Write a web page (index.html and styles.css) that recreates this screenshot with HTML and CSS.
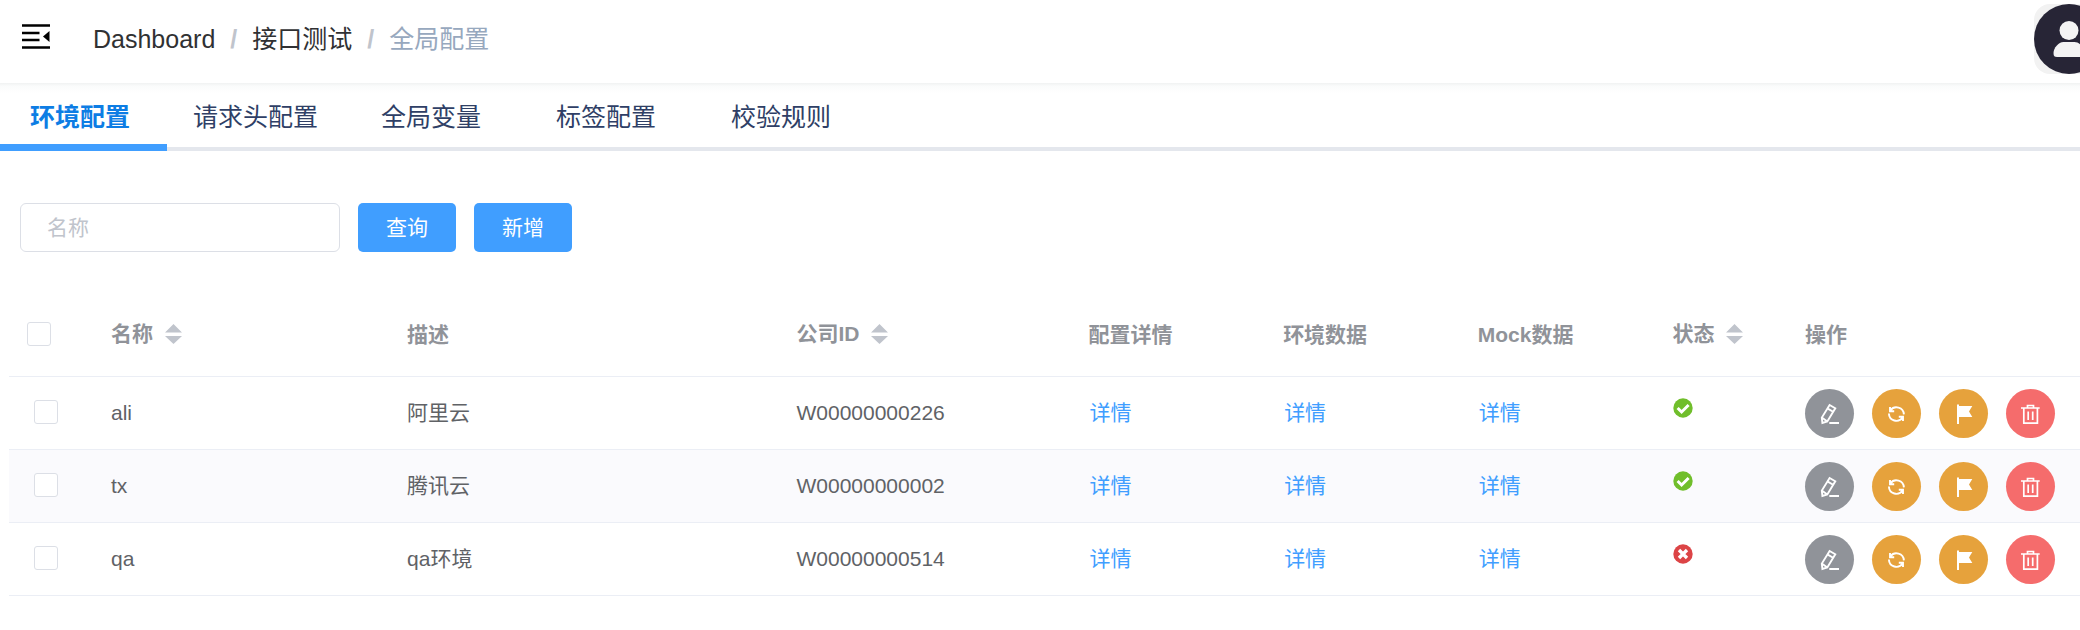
FILE: index.html
```html
<!DOCTYPE html>
<html lang="zh-CN">
<head>
<meta charset="utf-8">
<title>全局配置</title>
<link rel="stylesheet" href="styles.css">
</head>
<body>
<svg class="sprite" aria-hidden="true">
  <symbol id="i-edit" viewBox="0 0 49 49"><path d="M24.600 16l5.700 3.300-8 13.200-4.900 1.500-.6-5.400zM22.400 19.400l5.700 3.300M16.800 28.600l5.500 3.900M24.300 34H34" fill="none" stroke="currentColor" stroke-width="1.900"/></symbol>
  <symbol id="i-refresh" viewBox="0 0 49 49"><path d="M18 18v4.200h4.200M31 32v-4.200h-4.200M18.400 21.400a7.500 7.500 0 0 1 13.500 4M16.900 24.500a7.500 7.500 0 0 0 13.700 4" fill="none" stroke="currentColor" stroke-width="1.900"/></symbol>
  <symbol id="i-flag" viewBox="0 0 49 49"><path d="M18 15.500h2V17h13.300L30 22.500l3.300 5.500H20v7h-2z" fill="currentColor"/></symbol>
  <symbol id="i-delete" viewBox="0 0 49 49"><path d="M15 19h18.700M21.500 19v-2.500h6V19M17.800 19v15.200h13.600V19M22.200 22.500v8.500M26.700 22.500v8.500" fill="none" stroke="currentColor" stroke-width="1.700"/></symbol>
  <symbol id="i-ok" viewBox="0 0 20 20"><circle cx="10" cy="10" r="9.700" fill="#70be2b"/><path d="M4.600 10l4 4 7-7" fill="none" stroke="#fff" stroke-width="3"/></symbol>
  <symbol id="i-bad" viewBox="0 0 20 20"><circle cx="10" cy="10" r="9.700" fill="#dc4446"/><path d="M6 6l8 8M14 6l-8 8" fill="none" stroke="#fff" stroke-width="3.400"/></symbol>
  <symbol id="i-sort" viewBox="0 0 17 20"><path d="M0 8.500L8.500 0 17 8.500zM0 12h17L8.500 20z" fill="currentColor"/></symbol>
</svg>

<header class="topbar">
  <button class="fold" type="button" aria-label="折叠菜单">
    <svg viewBox="0 0 28 26" width="28" height="26"><path d="M0 1.500h28M0 9h17.500M0 16h17.500M0 23.500h28" stroke="#000" stroke-width="2.300" fill="none"/><path d="M21 12.500l6.500-5.500v11z"/></svg>
  </button>
  <nav class="breadcrumb" aria-label="面包屑">
    <a href="#">Dashboard</a><span class="slash">/</span><a href="#">接口测试</a><span class="slash">/</span><span class="current">全局配置</span>
  </nav>
  <button class="avatar" type="button" aria-label="用户">
    <svg viewBox="0 0 70 70" width="70" height="70"><circle cx="35" cy="35" r="35" fill="#272536"/><circle cx="35" cy="26.500" r="9.500" fill="#f4f4f4"/><path d="M19.500 49c0-5 5-11 10-11h11c5 0 10 6 10 11 0 3-1 4-3.500 4H23c-2.500 0-3.500-1-3.500-4z" fill="#f4f4f4"/></svg>
  </button>
</header>

<nav class="tabs">
  <a class="tab active" href="#">环境配置</a>
  <a class="tab" href="#">请求头配置</a>
  <a class="tab wide" href="#">全局变量</a>
  <a class="tab wide" href="#">标签配置</a>
  <a class="tab wide" href="#">校验规则</a>
</nav>

<main>
  <form class="search">
    <input class="field" type="text" placeholder="名称" aria-label="名称">
    <button class="btn" type="button">查询</button>
    <button class="btn" type="button">新增</button>
  </form>

  <div class="table-wrap">
    <table class="table">
      <colgroup>
        <col class="c-check"><col class="c-name"><col class="c-desc"><col class="c-company"><col class="c-link"><col class="c-link"><col class="c-link"><col class="c-status"><col class="c-ops">
      </colgroup>
      <thead>
        <tr>
          <th class="check"><input type="checkbox" aria-label="全选"></th>
          <th><span class="sortable">名称<svg class="sort"><use href="#i-sort"/></svg></span></th>
          <th>描述</th>
          <th><span class="sortable">公司ID<svg class="sort"><use href="#i-sort"/></svg></span></th>
          <th>配置详情</th>
          <th>环境数据</th>
          <th>Mock数据</th>
          <th><span class="sortable">状态<svg class="sort"><use href="#i-sort"/></svg></span></th>
          <th>操作</th>
        </tr>
      </thead>
      <tbody>
        <tr>
          <td class="check"><input type="checkbox" aria-label="选择 ali"></td>
          <td>ali</td><td>阿里云</td><td>W00000000226</td>
          <td><a class="link" href="#">详情</a></td><td><a class="link" href="#">详情</a></td><td><a class="link" href="#">详情</a></td>
          <td><svg class="state" role="img" aria-label="启用"><use href="#i-ok"/></svg></td>
          <td><div class="ops">
            <button class="op info" type="button" aria-label="编辑"><svg><use href="#i-edit"/></svg></button>
            <button class="op warn" type="button" aria-label="刷新"><svg><use href="#i-refresh"/></svg></button>
            <button class="op warn" type="button" aria-label="标记"><svg><use href="#i-flag"/></svg></button>
            <button class="op danger" type="button" aria-label="删除"><svg><use href="#i-delete"/></svg></button>
          </div></td>
        </tr>
        <tr class="striped">
          <td class="check"><input type="checkbox" aria-label="选择 tx"></td>
          <td>tx</td><td>腾讯云</td><td>W00000000002</td>
          <td><a class="link" href="#">详情</a></td><td><a class="link" href="#">详情</a></td><td><a class="link" href="#">详情</a></td>
          <td><svg class="state" role="img" aria-label="启用"><use href="#i-ok"/></svg></td>
          <td><div class="ops">
            <button class="op info" type="button" aria-label="编辑"><svg><use href="#i-edit"/></svg></button>
            <button class="op warn" type="button" aria-label="刷新"><svg><use href="#i-refresh"/></svg></button>
            <button class="op warn" type="button" aria-label="标记"><svg><use href="#i-flag"/></svg></button>
            <button class="op danger" type="button" aria-label="删除"><svg><use href="#i-delete"/></svg></button>
          </div></td>
        </tr>
        <tr>
          <td class="check"><input type="checkbox" aria-label="选择 qa"></td>
          <td>qa</td><td>qa环境</td><td>W00000000514</td>
          <td><a class="link" href="#">详情</a></td><td><a class="link" href="#">详情</a></td><td><a class="link" href="#">详情</a></td>
          <td><svg class="state" role="img" aria-label="停用"><use href="#i-bad"/></svg></td>
          <td><div class="ops">
            <button class="op info" type="button" aria-label="编辑"><svg><use href="#i-edit"/></svg></button>
            <button class="op warn" type="button" aria-label="刷新"><svg><use href="#i-refresh"/></svg></button>
            <button class="op warn" type="button" aria-label="标记"><svg><use href="#i-flag"/></svg></button>
            <button class="op danger" type="button" aria-label="删除"><svg><use href="#i-delete"/></svg></button>
          </div></td>
        </tr>
      </tbody>
    </table>
  </div>
</main>
</body>
</html>
```
FILE: styles.css
```css
* { box-sizing: border-box; }

body {
  margin: 0;
  background: #fff;
  color: #606266;
  font-family: "Liberation Sans", "Noto Sans CJK SC", sans-serif;
  font-size: 21px;
  line-height: 32px;
}

button, input { font: inherit; margin: 0; }
button { border: 0; padding: 0; cursor: pointer; }
a { text-decoration: none; color: inherit; }
.sprite { display: none; }

.topbar {
  display: flex;
  align-items: center;
  padding: 4px 0 9px 22px;
  overflow: hidden;
}
.fold {
  display: flex;
  background: none;
  margin: 0 43px 4px 0;
}
.breadcrumb {
  display: flex;
  flex: 1;
  font-size: 25px;
  color: #303133;
  white-space: nowrap;
}
.slash { margin: 0 15px; color: #c0c4cc; font-weight: 700; }
.current { color: #97a8be; }
.avatar {
  flex: none;
  display: flex;
  background: #f2f2f2;
  border-radius: 16px;
  overflow: hidden;
  margin-right: -24px;
}

.tabs {
  display: flex;
  border-bottom: 4px solid #e4e7ed;
  background: linear-gradient(#f0f2f2, #fafbfb 3px, #fff 10px);
  font-size: 25px;
  color: #2f3f66;
}
.tab {
  position: relative;
  padding: 18px 33px 14px 30px;
  white-space: nowrap;
}
.wide { min-width: 175px; }
.active { color: #0d7de4; font-weight: 700; }
.active::after {
  content: "";
  position: absolute;
  left: 0;
  bottom: -4px;
  width: 167px;
  height: 7px;
  background: #409eff;
}

.search {
  display: flex;
  flex-wrap: wrap;
  gap: 18px;
  padding: 52px 20px 50px;
}
.field {
  width: 320px;
  height: 49px;
  padding: 0 26px;
  border: 1px solid #dcdfe6;
  border-radius: 6px;
  background: #fff;
  color: #606266;
}
.field::placeholder { color: #c0c4cc; }
.btn {
  height: 49px;
  padding: 0 28px;
  border-radius: 5px;
  background: #409eff;
  color: #fff;
}

.table-wrap { margin-left: 9px; overflow-x: auto; }
.table {
  width: 100%;
  min-width: 1700px;
  table-layout: fixed;
  border-collapse: separate;
  border-spacing: 0;
}
.c-check { width: 4.2%; }
.c-name { width: 14.3%; }
.c-desc { width: 18.8%; }
.c-company { width: 14.1%; }
.c-link { width: 9.4%; }
.c-status { width: 6.4%; }
.c-ops { width: 14%; }

th, td {
  padding: 0 15px;
  text-align: left;
  vertical-align: middle;
  border-bottom: 1px solid #ebeef5;
  white-space: nowrap;
}
th { height: 75px; padding-bottom: 8px; color: #909399; font-weight: 700; }
td { height: 73px; }
.striped td { background: #fafafd; }
.check { padding-left: 25px; }
th.check { padding-left: 18px; }
.check input {
  appearance: none;
  display: block;
  width: 24px;
  height: 24px;
  margin-bottom: 2px;
  border: 1px solid #dcdfe6;
  border-radius: 3px;
  background: #fff;
}
.sortable { display: flex; align-items: center; gap: 12px; margin-bottom: 2px; }
.sort { width: 17px; height: 20px; color: #c0c4cc; }
.link { color: #409eff; padding-left: 1px; }
.state { display: block; width: 20px; height: 20px; margin: 0 0 10px 1px; }
.ops { display: flex; gap: 18px; }
.op {
  width: 49px;
  height: 49px;
  border-radius: 50%;
  color: #fff;
}
.op svg { display: block; width: 49px; height: 49px; }
.info { background: #909399; }
.warn { background: #e6a23c; }
.danger { background: #f56c6c; }
```
